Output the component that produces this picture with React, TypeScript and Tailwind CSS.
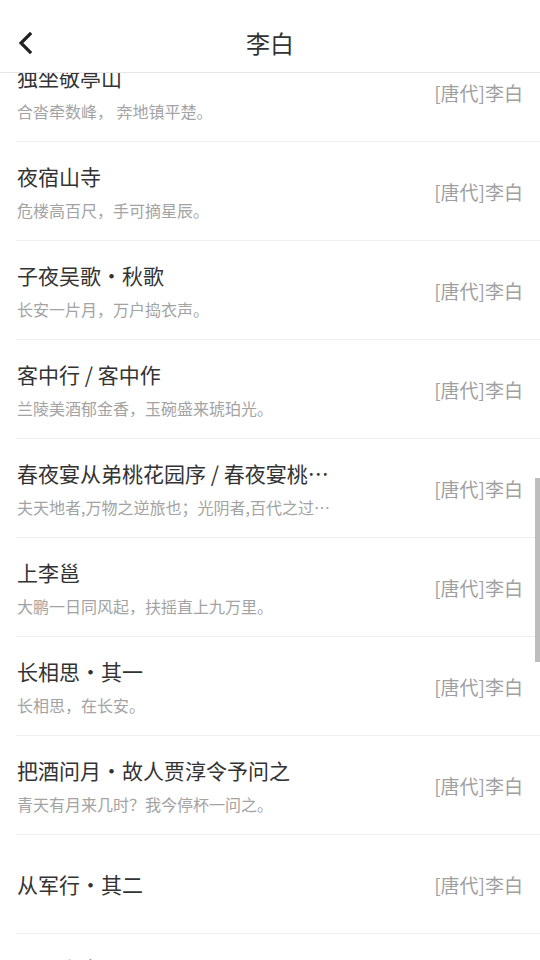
type Poem = {
  title: string
  line?: string
}

const poems: Poem[] = [
  { title: '独坐敬亭山', line: '合沓牵数峰， 奔地镇平楚。' },
  { title: '夜宿山寺', line: '危楼高百尺，手可摘星辰。' },
  { title: '子夜吴歌・秋歌', line: '长安一片月，万户捣衣声。' },
  { title: '客中行 / 客中作', line: '兰陵美酒郁金香，玉碗盛来琥珀光。' },
  { title: '春夜宴从弟桃花园序 / 春夜宴桃李园序', line: '夫天地者,万物之逆旅也；光阴者,百代之过客。' },
  { title: '上李邕', line: '大鹏一日同风起，扶摇直上九万里。' },
  { title: '长相思・其一', line: '长相思，在长安。' },
  { title: '把酒问月・故人贾淳令予问之', line: '青天有月来几时？我今停杯一问之。' },
  { title: '从军行・其二' },
  { title: '夏日山中', line: '懒摇白羽扇，裸袒青林中。' },
]

const font = { fontFamily: '"Noto Sans CJK SC", "Noto Sans", sans-serif' }

function PoemRow({ poem }: { poem: Poem }) {
  return (
    <div className="ml-4 flex h-[99px] border-b border-[#efefef] pr-[17px] pl-[1px]">
      {poem.line ? (
        <div className="max-w-[313px] min-w-0 pt-[20px]">
          <div className="truncate text-[21px] leading-[28px] text-[#333]">{poem.title}</div>
          <div className="mt-[9px] truncate text-[16px] leading-[22px] text-[#a3a3a3]">{poem.line}</div>
        </div>
      ) : (
        <div className="flex items-center">
          <div className="text-[21px] leading-[28px] text-[#333]">{poem.title}</div>
        </div>
      )}
      <div className="ml-auto flex items-center pt-[3px] text-[19px] text-[#a0a0a0]">[唐代]李白</div>
    </div>
  )
}

export default function App() {
  return (
    <div className="relative flex h-[960px] w-[540px] flex-col overflow-hidden bg-white" style={font}>
      <header className="relative z-10 flex h-[73px] shrink-0 items-center border-b border-[#e6e6e6] bg-white pt-[14px]">
        <button className="flex h-[40px] w-[50px] items-center pl-[18px]" aria-label="back">
          <svg width="15" height="22" viewBox="0 0 15 22" fill="none">
            <polyline points="12,2 3,11 12,20" stroke="#222" strokeWidth="3.2" strokeLinecap="square" />
          </svg>
        </button>
        <h1 className="absolute left-1/2 top-[14px] flex h-[58px] -translate-x-1/2 items-center text-[24px] text-[#333]">
          李白
        </h1>
      </header>

      <div className="flex-1 overflow-hidden">
        <div className="mt-[-30px]">
          {poems.map(p => (
            <PoemRow key={p.title} poem={p} />
          ))}
        </div>
      </div>

      {/* scroll indicator */}
      <div className="absolute right-0 top-[478px] h-[184px] w-[5px] bg-[#bdbdbd]" />
    </div>
  )
}
